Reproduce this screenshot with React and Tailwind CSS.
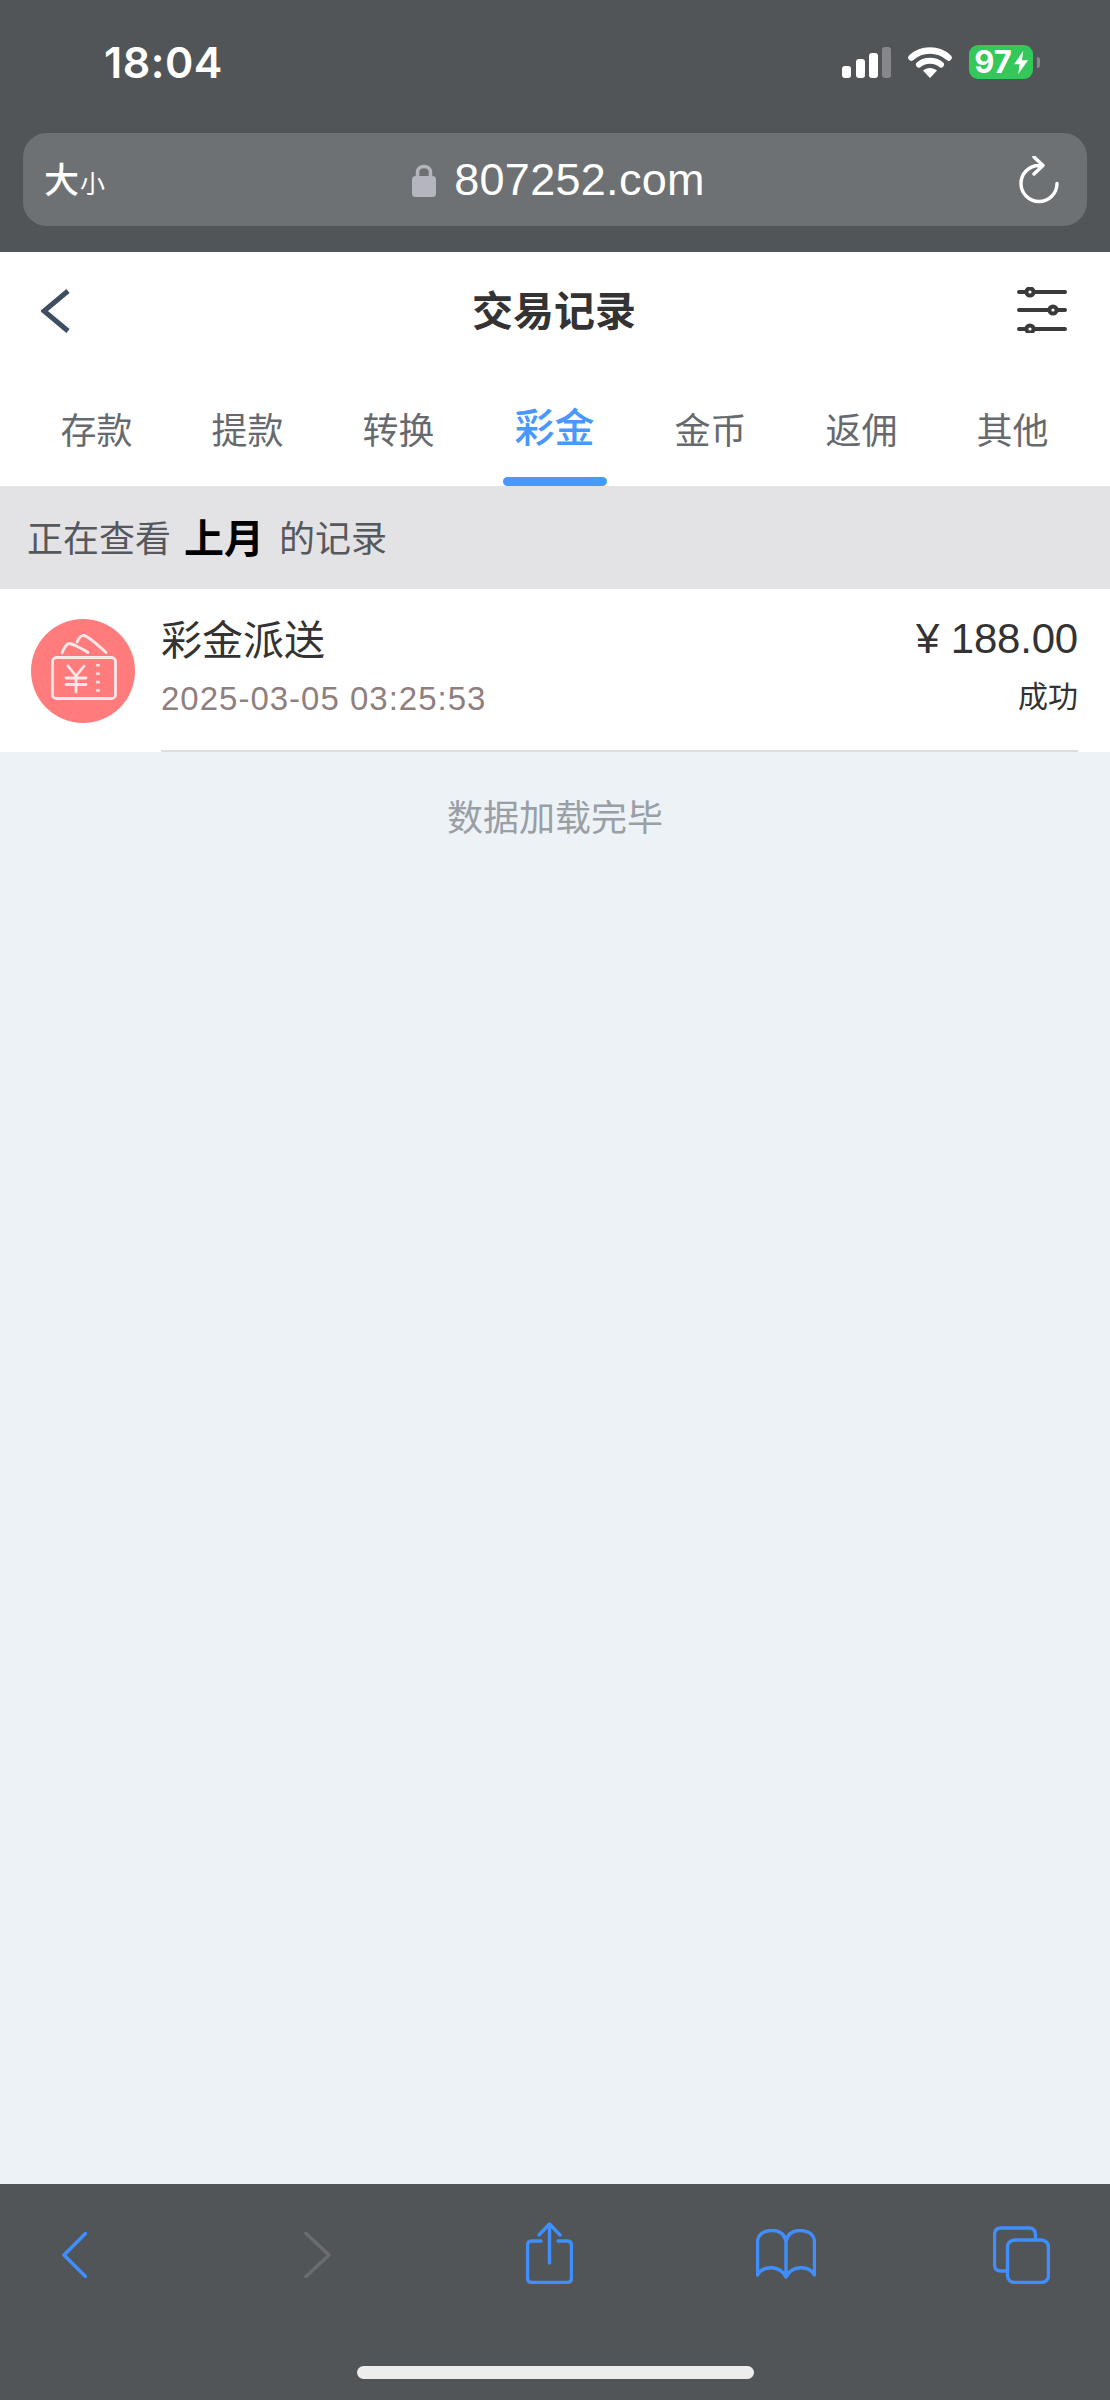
import { useState } from "react";

const tabs = ["存款", "提款", "转换", "彩金", "金币", "返佣", "其他"];

const cjk = "font-['Noto_Sans_CJK_SC','Noto_Sans_CJK_JP',sans-serif]";
const latin = "font-['Liberation_Sans','Noto_Sans_CJK_SC',sans-serif]";

// Status bar icons
const SignalIcon = () => (
  <svg width="49" height="31" viewBox="0 0 49 31" className="block">
    <rect x="0" y="19" width="9" height="12" rx="3" fill="#fff" />
    <rect x="14" y="12" width="9" height="19" rx="3" fill="#fff" />
    <rect x="27" y="6" width="9" height="25" rx="3" fill="#fff" />
    <rect x="40" y="0" width="9" height="31" rx="3" fill="#85878a" />
  </svg>
);

const WifiIcon = () => (
  <svg width="44" height="32" viewBox="0 0 44 32" className="block">
    <path d="M3.5 11.5C13.5 2 30.5 2 40.5 11.5" fill="none" stroke="#fff" strokeWidth="6.5" strokeLinecap="round" />
    <path d="M11 18.5C17 13.5 27 13.5 33 18.5" fill="none" stroke="#fff" strokeWidth="6" strokeLinecap="round" />
    <path d="M15 24.5C19 21 25 21 29 24.5L22 32Z" fill="#fff" />
  </svg>
);

const BoltIcon = () => (
  <svg width="14" height="25" viewBox="0 0 15 25" className="block">
    <path d="M10 0L0 14.5H6L4.5 25L15 10H8.5Z" fill="#fff" />
  </svg>
);

const RewardIcon = () => (
  <svg width="104" height="104" viewBox="0 0 104 104" className="block shrink-0">
    <circle cx="52" cy="52" r="52" fill="#ff7b7c" />
    <g fill="none" stroke="#ffe8e8" strokeWidth="2.8" strokeLinecap="round" strokeLinejoin="round">
      <rect x="21.5" y="38.5" width="63" height="41" rx="4" />
      <path d="M31 34C33 29 35 25 38 24.5C41 24.5 52 30 57 33.5" />
      <path d="M46 23C48 19 50 16 53 16.5C56 17 68 27 75 33.5" />
      <path d="M37 47L45 57L53 47M35 59H55M35 65.5H55M45 57V73" />
      <path d="M67 45V74" strokeWidth="3.6" strokeDasharray="2.6 5.8" strokeLinecap="butt" />
    </g>
  </svg>
);

export default function App() {
  const [active] = useState(3);

  return (
    <div className={`w-[1110px] h-[2400px] flex flex-col bg-[#edf2f6] overflow-hidden ${latin}`}>
      {/* browser chrome */}
      <div className="h-[252px] shrink-0 bg-[#525558] flex flex-col">
        <div className="h-[133px] flex items-start pl-[104px] pr-[70px] pt-[45px] justify-between">
          <span className="font-['Inter',sans-serif] text-[43px] leading-[34px] font-semibold text-white tracking-[0.5px]">
            18:04
          </span>
          <div className="flex items-center">
            <SignalIcon />
            <div className="ml-[17px]">
              <WifiIcon />
            </div>
            <div className="ml-[17px] w-[64px] h-[34px] rounded-[9px] bg-[#34c759] flex items-center justify-center gap-[2px]">
              <span className="font-['Inter',sans-serif] text-[31px] leading-[34px] font-bold text-white">97</span>
              <BoltIcon />
            </div>
            <div className="ml-[4px] w-[3px] h-[11px] rounded-r-full bg-[#85878a]" />
          </div>
        </div>
        <div className="px-[23px]">
          <div className="h-[93px] rounded-[24px] bg-[#6e7174] flex items-center pl-[21px] pr-[28px]">
            <div className={`w-[120px] flex items-baseline text-white ${cjk}`}>
              <span className="text-[35px] leading-[44px] font-medium">大</span>
              <span className="text-[25px] leading-[44px] ml-[1px]">小</span>
            </div>
            <div className="flex-1 flex items-center justify-center gap-[18px] pr-[66px]">
              <svg width="24" height="34" viewBox="0 0 24 34" className="block">
                <path d="M5.5 15V9C5.5 1.5 18.5 1.5 18.5 9V15" fill="none" stroke="#b5b6bd" strokeWidth="3.5" />
                <rect x="0" y="13" width="24" height="21" rx="3.5" fill="#b5b6bd" />
              </svg>
              <span className="text-[45px] leading-[50px] text-white tracking-[0.3px]">807252.com</span>
            </div>
            <svg width="40" height="48" viewBox="0 0 40 48" className="block">
              <path
                d="M20 9.5A18 18 0 1 0 38 27.5M15 1L24 9.5L15 18"
                fill="none"
                stroke="#fff"
                strokeWidth="3.4"
                strokeLinecap="round"
                strokeLinejoin="round"
              />
            </svg>
          </div>
        </div>
      </div>

      {/* page header */}
      <div className="bg-white shrink-0">
        <div className="h-[116px] flex items-center justify-between pl-[41px] pr-[43px]">
          <div className="w-[50px]">
            <svg width="30" height="44" viewBox="0 0 30 44" className="block mt-[1px]">
              <path d="M27 2L3 22L27 42" fill="none" stroke="#3f4f63" strokeWidth="5" />
            </svg>
          </div>
          <h1 className={`text-[41px] leading-[50px] font-bold text-[#333] pb-[5px] ${cjk}`}>交易记录</h1>
          <svg width="50" height="46" viewBox="0 0 50 46" className="block">
            <path d="M2 5H48M2 23H48M2 42H48" fill="none" stroke="#3a3a3a" strokeWidth="4" strokeLinecap="round" />
            <g fill="#fff" stroke="#3a3a3a" strokeWidth="4">
              <circle cx="13" cy="5" r="3.6" />
              <circle cx="36" cy="23" r="3.6" />
              <circle cx="13" cy="42" r="3.6" />
            </g>
          </svg>
        </div>
        <div className={`h-[118px] flex pl-[21px] ${cjk}`}>
          {tabs.map((tab, idx) => (
            <div
              key={tab}
              className={`flex flex-col items-center ${idx === active ? "w-[161px]" : "w-[151px]"}`}
            >
              <div
                className={`h-[109px] flex items-center ${
                  idx === active
                    ? "text-[40px] font-medium text-[#4a98ff] pt-[4px]"
                    : "text-[36px] text-[#666a6e] pt-[10px]"
                }`}
              >
                {tab}
              </div>
              {idx === active && <div className="w-[104px] h-[9px] rounded-full bg-[#4a98ff]" />}
            </div>
          ))}
        </div>
      </div>

      {/* period */}
      <div className={`h-[103px] shrink-0 bg-[#e3e3e6] flex items-center pl-[27px] pb-[4px] text-[36px] text-[#55585c] ${cjk}`}>
        <span>正在查看</span>
        <span className="ml-[13px] text-[40px] font-bold text-black">上月</span>
        <span className="ml-[15px]">的记录</span>
      </div>

      {/* record */}
      <div className="h-[163px] shrink-0 bg-white flex pl-[31px]">
        <div className="pt-[30px]">
          <RewardIcon />
        </div>
        <div className="flex-1 ml-[26px] mr-[32px] flex justify-between border-b-2 border-[#dcdee0]">
          <div>
            <div className={`mt-[21px] text-[41px] leading-[54px] text-[#333] ${cjk}`}>彩金派送</div>
            <div className="mt-[16px] text-[33px] leading-[38px] text-[#8f7f7f] tracking-[1px]">
              2025-03-05 03:25:53
            </div>
          </div>
          <div className="flex flex-col items-end">
            <div className="mt-[26px] text-[42px] leading-[48px] text-[#333] tracking-[-0.2px]">¥ 188.00</div>
            <div className={`mt-[9px] text-[30px] leading-[44px] text-[#333] ${cjk}`}>成功</div>
          </div>
        </div>
      </div>

      <div className="flex-1">
        <div className={`pt-[37px] text-center text-[36px] leading-[52px] text-[#999fa5] ${cjk}`}>数据加载完毕</div>
      </div>

      {/* browser toolbar */}
      <div className="h-[216px] shrink-0 bg-[#525558] flex flex-col">
        <div className="h-[182px] flex items-start pl-[62px] pt-[38px]">
          <svg width="25" height="46" viewBox="0 0 25 46" className="block mt-[10px]">
            <path d="M23.5 1.5L2 23L23.5 44.5" fill="none" stroke="#3f8efc" strokeWidth="3.6" strokeLinecap="round" strokeLinejoin="round" />
          </svg>
          <svg width="27" height="46" viewBox="0 0 27 46" className="block mt-[10px] ml-[217px]">
            <path d="M2 1.5L25 23L2 44.5" fill="none" stroke="#6a6c6f" strokeWidth="3.6" strokeLinecap="round" strokeLinejoin="round" />
          </svg>
          <svg width="47" height="62" viewBox="0 0 47 62" className="block ml-[195px]">
            <g fill="none" stroke="#3f8efc" strokeWidth="3.4" strokeLinecap="round" strokeLinejoin="round">
              <path d="M15 19H6C3 19 1.5 20.5 1.5 23.5V56C1.5 59 3 60.5 6 60.5H41C44 60.5 45.5 59 45.5 56V23.5C45.5 20.5 44 19 41 19H32" />
              <path d="M23.5 2V41M13 13L23.5 2L34 13" />
            </g>
          </svg>
          <svg width="60" height="50" viewBox="0 0 60 50" className="block mt-[7px] ml-[183px]">
            <g fill="none" stroke="#3f8efc" strokeWidth="3.4" strokeLinejoin="round">
              <path d="M30 12C28 4 22 1.5 16 1.5C7 1.5 1.5 6 1.5 13V46C7 36 24 36 30 48C36 36 53 36 58.5 46V13C58.5 6 53 1.5 44 1.5C38 1.5 32 4 30 12V48" />
            </g>
          </svg>
          <svg width="57" height="58" viewBox="0 0 57 58" className="block mt-[4px] ml-[177px]">
            <g fill="none" stroke="#3f8efc" strokeWidth="3.4" strokeLinejoin="round">
              <path d="M13 45H8C3.5 45 1.5 43 1.5 38.5V9C1.5 4 3.5 2 8 2H36C40.5 2 42.5 4 42.5 9V13" />
              <rect x="14.5" y="14" width="41" height="42.5" rx="7" />
            </g>
          </svg>
        </div>
        <div className="flex justify-center">
          <div className="w-[397px] h-[13px] rounded-full bg-[#ededed]" />
        </div>
      </div>
    </div>
  );
}
